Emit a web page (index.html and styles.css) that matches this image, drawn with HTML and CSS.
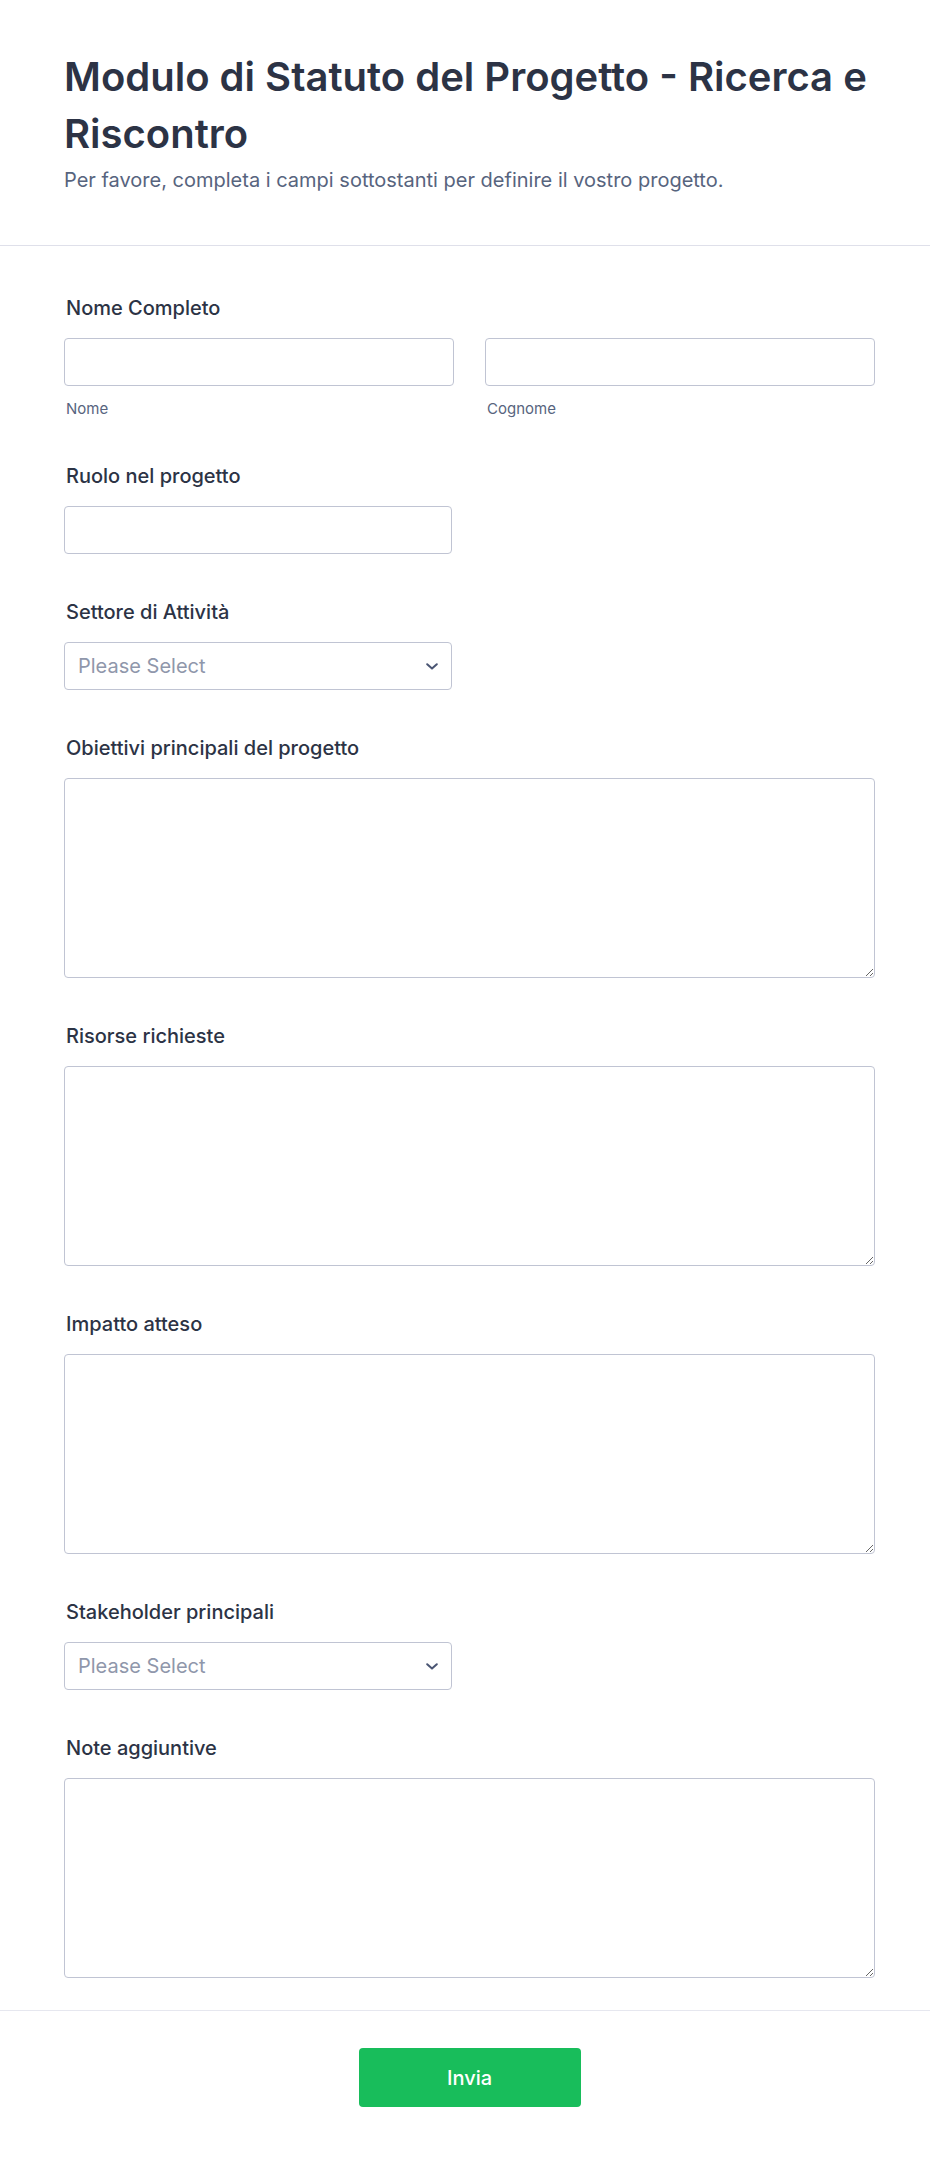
FILE: index.html
```html
<!DOCTYPE html>
<html lang="it">
<head>
<meta charset="utf-8">
<title>Modulo di Statuto del Progetto - Ricerca e Riscontro</title>
<link rel="stylesheet" href="styles.css">
</head>
<body>
<div class="page">
  <header class="form-header">
    <h1 class="form-title">Modulo di Statuto del Progetto - Ricerca e Riscontro</h1>
    <p class="form-subtitle">Per favore, completa i campi sottostanti per definire il vostro progetto.</p>
  </header>

  <form class="form-body">
    <div class="field">
      <label class="field-label">Nome Completo</label>
      <div class="name-grid">
        <div class="name-col">
          <input class="text-input" type="text">
          <span class="sublabel">Nome</span>
        </div>
        <div class="name-col">
          <input class="text-input" type="text">
          <span class="sublabel">Cognome</span>
        </div>
      </div>
    </div>

    <div class="field">
      <label class="field-label">Ruolo nel progetto</label>
      <input class="text-input half" type="text">
    </div>

    <div class="field">
      <label class="field-label">Settore di Attività</label>
      <div class="select-wrap half">
        <select class="select-input"><option>Please Select</option></select>
        <svg class="chevron" width="12" height="7" viewBox="0 0 12 7"><path d="M1.2 1.2 L6 5.6 L10.8 1.2" fill="none" stroke="#4a5573" stroke-width="2" stroke-linecap="round" stroke-linejoin="round"/></svg>
      </div>
    </div>

    <div class="field">
      <label class="field-label">Obiettivi principali del progetto</label>
      <textarea class="text-area"></textarea>
    </div>

    <div class="field">
      <label class="field-label">Risorse richieste</label>
      <textarea class="text-area"></textarea>
    </div>

    <div class="field">
      <label class="field-label">Impatto atteso</label>
      <textarea class="text-area"></textarea>
    </div>

    <div class="field">
      <label class="field-label">Stakeholder principali</label>
      <div class="select-wrap half">
        <select class="select-input"><option>Please Select</option></select>
        <svg class="chevron" width="12" height="7" viewBox="0 0 12 7"><path d="M1.2 1.2 L6 5.6 L10.8 1.2" fill="none" stroke="#4a5573" stroke-width="2" stroke-linecap="round" stroke-linejoin="round"/></svg>
      </div>
    </div>

    <div class="field">
      <label class="field-label">Note aggiuntive</label>
      <textarea class="text-area"></textarea>
    </div>
  </form>

  <footer class="form-footer">
    <button class="submit-btn" type="button">Invia</button>
  </footer>
</div>
</body>
</html>
```

FILE: styles.css
```css
* {
  box-sizing: border-box;
}

html, body {
  margin: 0;
  padding: 0;
  background: #ffffff;
}

body {
  font-family: Inter, "Noto Sans", "Liberation Sans", sans-serif;
  color: #2c3345;
}

.page {
  width: 930px;
}

.form-header {
  padding: 48px 55px 50px 64px;
  border-bottom: 1px solid #dfe0ea;
}

.form-title {
  margin: 0;
  font-size: 40px;
  line-height: 57px;
  font-weight: 600;
  color: #2c3345;
}

.form-subtitle {
  margin: 3px 0 0;
  font-size: 20px;
  line-height: 30px;
  color: #57647e;
}

.form-body {
  padding: 35px 55px 1px 64px;
  display: flex;
  flex-direction: column;
}

.field {
  padding: 12px 0 31px;
  display: flex;
  flex-direction: column;
}

.field-label {
  display: block;
  font-size: 20px;
  line-height: 30px;
  font-weight: 500;
  color: #2c3345;
  margin: 0 0 15px 2px;
}

.name-grid {
  display: grid;
  grid-template-columns: 1fr 1fr;
  column-gap: 31px;
}

.name-col {
  display: flex;
  flex-direction: column;
}

.text-input {
  display: block;
  width: 100%;
  height: 48px;
  border: 1px solid #c0c4d3;
  border-radius: 4px;
  background: #fff;
  font-family: inherit;
  font-size: 20px;
  padding: 0 13px;
  outline: none;
}

.half {
  width: 388px;
}

.sublabel {
  display: block;
  margin: 14px 0 0 2px;
  font-size: 15px;
  line-height: 18px;
  color: #57647e;
}

.select-wrap {
  position: relative;
  height: 48px;
}

.select-input {
  appearance: none;
  -webkit-appearance: none;
  display: block;
  width: 100%;
  height: 48px;
  border: 1px solid #c0c4d3;
  border-radius: 4px;
  background: #fff;
  font-family: inherit;
  font-size: 20px;
  color: #8f97ab;
  padding: 0 40px 0 13px;
  outline: none;
}

.chevron {
  position: absolute;
  right: 14px;
  top: 21px;
  pointer-events: none;
}

.text-area {
  display: block;
  width: 100%;
  height: 200px;
  border: 1px solid #c0c4d3;
  border-radius: 4px;
  background: #fff;
  font-family: inherit;
  font-size: 20px;
  padding: 10px 13px;
  outline: none;
  resize: vertical;
}

.form-footer {
  border-top: 1px solid #e6e7ef;
  padding: 37px 55px 50px 64px;
  display: flex;
  justify-content: center;
}

.submit-btn {
  width: 222px;
  height: 59px;
  border: none;
  border-radius: 4px;
  background: #18bd5b;
  color: #ffffff;
  font-family: inherit;
  font-size: 20px;
  font-weight: 500;
}
```
